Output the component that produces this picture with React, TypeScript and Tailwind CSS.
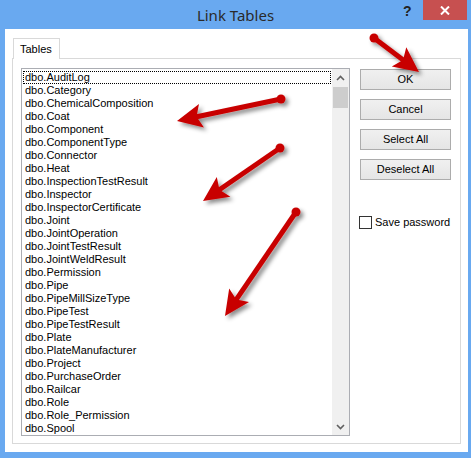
import React from 'react';

const tables = [
  'AuditLog',
  'Category',
  'ChemicalComposition',
  'Coat',
  'Component',
  'ComponentType',
  'Connector',
  'Heat',
  'InspectionTestResult',
  'Inspector',
  'InspectorCertificate',
  'Joint',
  'JointOperation',
  'JointTestResult',
  'JointWeldResult',
  'Permission',
  'Pipe',
  'PipeMillSizeType',
  'PipeTest',
  'PipeTestResult',
  'Plate',
  'PlateManufacturer',
  'Project',
  'PurchaseOrder',
  'Railcar',
  'Role',
  'Role_Permission',
  'Spool',
];

const buttons = ['OK', 'Cancel', 'Select All', 'Deselect All'];

// callout arrows: dot at (x1,y1), tip at (x2,y2)
const arrows = [
  { x1: 374, y1: 38, x2: 419, y2: 72 },
  { x1: 281, y1: 99, x2: 177, y2: 121 },
  { x1: 280, y1: 148, x2: 203, y2: 201 },
  { x1: 296, y1: 212, x2: 225, y2: 316 },
];

function Arrow({ x1, y1, x2, y2 }: { x1: number; y1: number; x2: number; y2: number }) {
  const dx = x2 - x1;
  const dy = y2 - y1;
  const len = Math.hypot(dx, dy);
  const ux = dx / len;
  const uy = dy / len;
  const head = 25;
  const half = 12;
  const bx = x2 - ux * head;
  const by = y2 - uy * head;
  const px = -uy;
  const py = ux;
  const pts = [
    [x2, y2],
    [bx + px * half, by + py * half],
    [bx + ux * 5, by + uy * 5],
    [bx - px * half, by - py * half],
  ]
    .map((p) => p.join(','))
    .join(' ');
  return (
    <g filter="url(#shadow)">
      <line x1={x1} y1={y1} x2={bx + ux * 6} y2={by + uy * 6} stroke="#c80000" strokeWidth={5} />
      <circle cx={x1} cy={y1} r={4.5} fill="#c80000" />
      <polygon points={pts} fill="#c80000" />
    </g>
  );
}

function Chevron({ up }: { up?: boolean }) {
  return (
    <svg width="9" height="6" viewBox="0 0 9 6">
      <path
        d={up ? 'M1 5 L4.5 1.5 L8 5' : 'M1 1 L4.5 4.5 L8 1'}
        fill="none"
        stroke="#606060"
        strokeWidth={1.6}
      />
    </svg>
  );
}

export default function App() {
  return (
    <div
      className="relative w-[471px] h-[458px] bg-[#69a9f0] flex flex-col overflow-hidden"
      style={{ fontFamily: '"Liberation Sans", Arial, sans-serif' }}
    >
      {/* title bar */}
      <div className="relative h-[29px] shrink-0 flex items-center justify-center">
        <span className="text-[15px] text-[#2a2a2a] mt-[1px]" style={{ fontFamily: '"Noto Sans", sans-serif' }}>
          Link Tables
        </span>
        <span className="absolute left-[403px] top-[1px] text-[14px] font-bold text-[#222]">?</span>
        <div className="absolute left-[423px] top-0 w-[44px] h-[20px] bg-[#c75050] flex items-center justify-center">
          <svg width="10" height="9" viewBox="0 0 10 9">
            <path d="M1 0.5 L9 8.5 M9 0.5 L1 8.5" stroke="#fff" strokeWidth={2} />
          </svg>
        </div>
      </div>

      {/* client area */}
      <div className="flex-1 ml-[5px] mr-[3px] mb-[8px] bg-white pt-[8px] px-[7px] pb-[8px] flex flex-col">
        <div className="flex">
          <div className="ml-[1px] h-[21px] w-[47px] border border-b-0 border-[#d9d9d9] bg-white relative top-[1px] z-10 flex items-center pl-[6px] text-[11px] text-black">
            Tables
          </div>
        </div>
        <div className="flex-1 border border-[#d9d9d9] flex pl-[8px] pt-[9px] pb-[7px]">
          {/* list box */}
          <div className="w-[329px] border border-[#abadb3] flex">
            <div className="w-[310px] pt-[2px] px-[1px] overflow-hidden">
              {tables.map((t, i) => (
                <div
                  key={t}
                  className={`h-[13px] leading-[11px] pl-[1px] text-[11px] text-black whitespace-nowrap border ${
                    i === 0 ? 'border-dotted border-black' : 'border-transparent'
                  }`}
                >
                  dbo.{t}
                </div>
              ))}
            </div>
            <div className="w-[17px] bg-[#f0f0f0] flex flex-col items-center">
              <div className="h-[17px] flex items-center justify-center">
                <Chevron up />
              </div>
              <div className="w-[15px] h-[21px] bg-[#cdcdcd] mt-[1px]" />
              <div className="flex-1" />
              <div className="h-[17px] flex items-center justify-center">
                <Chevron />
              </div>
            </div>
          </div>

          {/* buttons */}
          <div className="ml-[10px] pt-[1px] flex flex-col">
            <div className="flex flex-col gap-[9px]">
              {buttons.map((b) => (
                <div
                  key={b}
                  className="w-[91px] h-[21px] border border-[#acacac] bg-gradient-to-b from-[#f0f0f0] to-[#e5e5e5] flex items-center justify-center text-[11px] text-black"
                >
                  {b}
                </div>
              ))}
            </div>
            <div className="mt-[34px] flex items-center gap-[3px] -ml-[1px]">
              <div className="w-[13px] h-[13px] border border-[#333] bg-white" />
              <span className="text-[11px] text-black">Save password</span>
            </div>
          </div>
        </div>
      </div>

      {/* callout arrows */}
      <svg className="absolute inset-0 pointer-events-none" width="471" height="458">
        <defs>
          <filter id="shadow" x="-30%" y="-30%" width="160%" height="160%">
            <feDropShadow dx="3" dy="3" stdDeviation="2" floodColor="#000" floodOpacity="0.45" />
          </filter>
        </defs>
        {arrows.map((a, i) => (
          <Arrow key={i} {...a} />
        ))}
      </svg>
    </div>
  );
}
